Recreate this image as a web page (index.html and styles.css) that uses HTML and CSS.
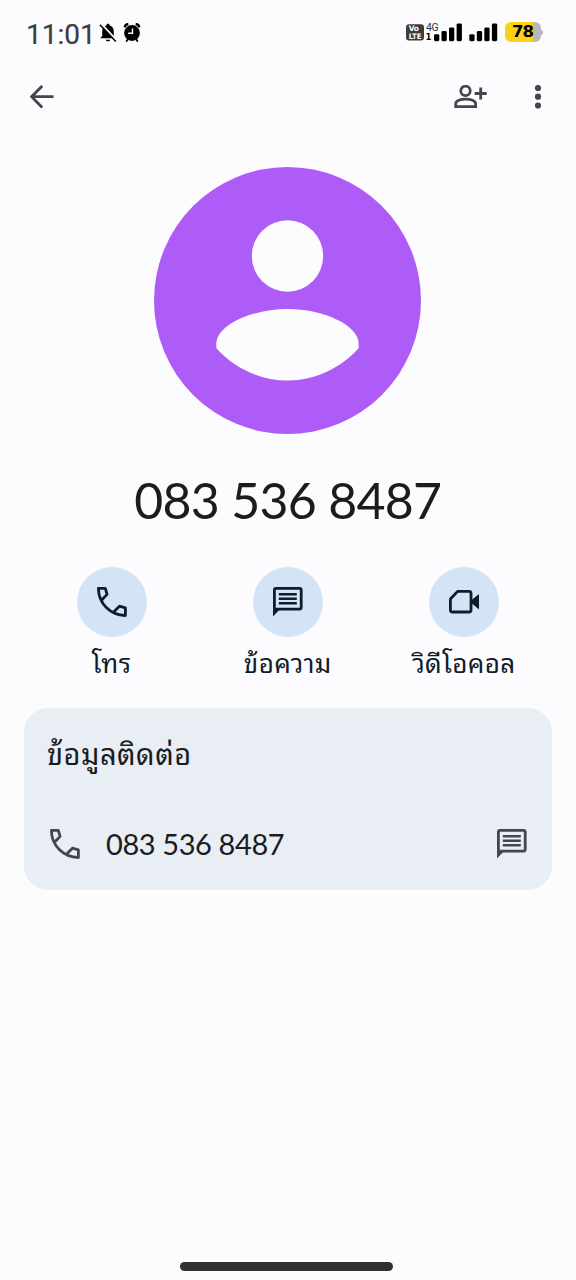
FILE: index.html
```html
<!DOCTYPE html>
<html lang="th">
<head>
<meta charset="utf-8">
<meta name="viewport" content="width=device-width">
<title>083 536 8487</title>
<link rel="stylesheet" href="styles.css">
</head>
<body>
<svg class="defs" width="0" height="0" aria-hidden="true">
  <symbol id="phone" viewBox="0 0 30 30"><path fill="none" stroke="currentColor" stroke-width="2.8" stroke-linejoin="round" d="M4.500 13.200 10.100 7.400 8.300 1.400H1.400C1.600 16.600 13.200 28 28.400 28.500V20.900L22.400 19.200 16.700 25"/></symbol>
  <symbol id="message" viewBox="0 0 30 30"><path fill="currentColor" d="M0 22h7.200L0 29.400z"/><g fill="none" stroke="currentColor"><rect x="1.400" y="1.400" width="26.800" height="20.800" rx="1.600" stroke-width="2.800"/><path stroke-width="2.400" d="M5.800 7.200h18M5.800 11.700h18M5.800 16.200h18"/></g></symbol>
  <symbol id="video" viewBox="0 0 30 24"><path fill="none" stroke="currentColor" stroke-width="2.800" stroke-linejoin="round" d="M1.400 9 8.600 1.400H20q2 0 2 2V20q0 2-2 2H3.400q-2 0-2-2z"/><path fill="currentColor" d="M22 10.400 30 4v15.400l-8-6.600z"/></symbol>
</svg>
<header class="status">
  <span class="clock">11:01</span>
  <svg class="alerts" viewBox="0 0 42 20" width="42" height="20">
    <path d="M9 .8c1.100 0 1.600.7 1.600 1.600 3 .8 4.200 3 4.200 6v4.500l2 2.400H1.200l2-2.400V8.400c0-3 1.200-5.200 4.200-6C7.400 1.500 7.900.8 9 .8zM6.800 16.700h4.400c-.4 2-4 2-4.400 0z"/>
    <path d="M2.200.8 18 17.600" stroke="#fcfcff" stroke-width="2"/>
    <path d="M.9 1.700 16.800 18.600" stroke="#000" stroke-width="1.500"/>
    <circle cx="33" cy="10" r="7.900"/>
    <path d="M25.700 4.400q.4-3 3.600-3.400M36.700 1q3.200.4 3.600 3.400" fill="none" stroke="#000" stroke-width="2.600"/>
    <path d="m29 16-1.800 2.700m9.800-2.700 1.800 2.700" stroke="#000" stroke-width="1.700"/>
    <path d="M33.500 5.500v4.700h-4.300" fill="none" stroke="#fcfcff" stroke-width="1.400"/>
  </svg>
  <svg class="signals" viewBox="0 -6 92 32" width="92" height="32">
    <rect y="1.200" width="18" height="16.200" rx="3" fill="#3d3d3f"/>
    <text x="2.800" y="8.300" class="volte" textLength="10">Vo</text>
    <text x="2.800" y="15.500" class="volte" textLength="12.500" lengthAdjust="spacingAndGlyphs">LTE</text>
    <text x="20" y="8" class="net" textLength="12.700">4G</text>
    <text x="19.800" y="17" class="sim">1</text>
    <g id="bars"><rect x="28" y="11.200" width="5.300" height="7" rx="1.400"/><rect x="35.500" y="8" width="5.300" height="10.200" rx="1.400"/><rect x="43" y="4.500" width="5.300" height="13.700" rx="1.400"/><rect x="50.600" y=".4" width="5.300" height="17.800" rx="1.400"/></g>
    <use href="#bars" x="35.300"/>
  </svg>
  <span class="battery">78</span><i class="nub"></i>
</header>
<nav class="toolbar">
  <svg class="back" viewBox="0 0 24 24" width="24" height="24"><path d="M23.500 11.700H2M12.200.9 1.600 11.700l10.600 10.800"/></svg>
  <svg class="add" viewBox="0 0 33 24" width="33" height="24"><circle cx="11.500" cy="5.900" r="4.700"/><path d="M1.700 21.700v-3c0-6.100 19.900-6.100 19.900 0v3zM20.700 8.500h12M26.700 2.600v11.800"/></svg>
  <svg class="more" viewBox="0 0 8 24" width="8" height="24"><circle cx="4" cy="3" r="3.100"/><circle cx="4" cy="11.700" r="3.100"/><circle cx="4" cy="20.500" r="3.100"/></svg>
</nav>
<main>
  <svg class="avatar" viewBox="0 0 267 267" width="267" height="267"><circle cx="133.500" cy="133.500" r="133.500" fill="#ae5cf7"/><g fill="#fcfcff"><circle cx="133.500" cy="89" r="35.700"/><path d="M62.300 181v-4C62.300 158 98 142 133.500 142S204.700 158 204.700 177v4C187 201 161 213.500 133.500 213.500S80 201 62.300 181z"/></g></svg>
  <h1 class="number">083 536 8487</h1>
  <section class="actions">
    <div class="action"><span class="disc"><svg width="30" height="30"><use href="#phone"/></svg></span><span class="label">โทร</span></div>
    <div class="action"><span class="disc"><svg width="30" height="30"><use href="#message"/></svg></span><span class="label">ข้อความ</span></div>
    <div class="action"><span class="disc"><svg width="30" height="24"><use href="#video"/></svg></span><span class="label">วิดีโอคอล</span></div>
  </section>
  <section class="card">
    <h2 class="title">ข้อมูลติดต่อ</h2>
    <div class="row"><svg width="30" height="30"><use href="#phone"/></svg><span class="phone">083 536 8487</span><svg width="30" height="30"><use href="#message"/></svg></div>
  </section>
</main>
<footer class="home"><i class="pill"></i></footer>
</body>
</html>
```
FILE: styles.css
```css
* { box-sizing: border-box; }
body { margin: 0; height: 1280px; background: #fcfcff; color: #1a1c1e; font-family: Lato, sans-serif; display: flex; flex-direction: column; overflow: hidden; }
svg { display: block; flex: none; }
.defs { position: absolute; }
.status { height: 64px; display: flex; align-items: center; padding: 0 33px 0 26px; }
.clock { font: 28px/32px Roboto, sans-serif; color: #3c3d40; width: 73px; padding-top: 5px; -webkit-text-stroke: 0.2px #3c3d40; }
.alerts { margin-top: 1px; }
.signals { margin-left: auto; margin-top: 1px; }
.volte { font: bold 7.5px "DejaVu Sans", sans-serif; fill: #fff; }
.net { font: 10.5px Roboto, sans-serif; fill: #333; }
.sim { font: bold 8px "DejaVu Sans", sans-serif; }
.battery { margin-left: 7px; width: 36px; height: 20px; border-radius: 6px; background: linear-gradient(90deg, #fcd116 78%, #b9b9bb 78%); color: #000; font: bold 16.5px/20px "DejaVu Sans", sans-serif; letter-spacing: -1px; padding-left: 7px; }
.nub { width: 2px; height: 5px; border-radius: 0 2px 2px 0; background: #b9b9bb; }
.toolbar { height: 65px; display: flex; align-items: center; padding: 0 34px 0 29.5px; }
.back, .add { fill: none; stroke: #42474e; stroke-width: 2.8px; }
.add { margin-left: auto; margin-right: 47px; }
.more { fill: #42474e; }
main { flex: 1; display: flex; flex-direction: column; padding: 38px 24px 0 23.5px; }
.avatar { align-self: center; margin-right: 0.5px; }
.number { margin: 31px 0 0; height: 70px; font-size: 50px; line-height: 70px; font-weight: 400; letter-spacing: -0.7px; text-align: center; }
.actions { display: flex; margin-top: 30px; height: 141px; }
.action { flex: 1; display: flex; flex-direction: column; align-items: center; color: #0e1d2a; }
.disc { width: 70px; height: 70px; border-radius: 50%; background: #d4e4f6; display: flex; align-items: center; justify-content: center; margin-top: 2px; }
.label, .title { font-family: "Noto Sans Thai Looped", "Noto Looped Thai", Waree, Loma, Garuda, "Noto Serif Thai", "Noto Sans Thai", "Noto Sans", sans-serif; }
.label { font-size: 26px; line-height: 40px; margin-top: 4px; letter-spacing: 0.4px; white-space: nowrap; }
.card { height: 181.5px; border-radius: 24px; background: #e9eef5; padding: 21px 25.5px 0 23.5px; margin-top: 2px; }
.title { margin: 0; font-size: 29px; font-weight: 400; line-height: 46px; height: 77px; letter-spacing: 0.5px; }
.row { display: flex; align-items: center; height: 76px; color: #42474e; padding-left: 3px; }
.phone { flex: 1; margin: 0 0 2px 26px; font-size: 29px; letter-spacing: -0.4px; color: #1a1c1e; }
.home { height: 18px; display: flex; justify-content: center; padding-right: 3px; }
.pill { width: 213px; height: 9px; border-radius: 5px; background: #303030; }
```
